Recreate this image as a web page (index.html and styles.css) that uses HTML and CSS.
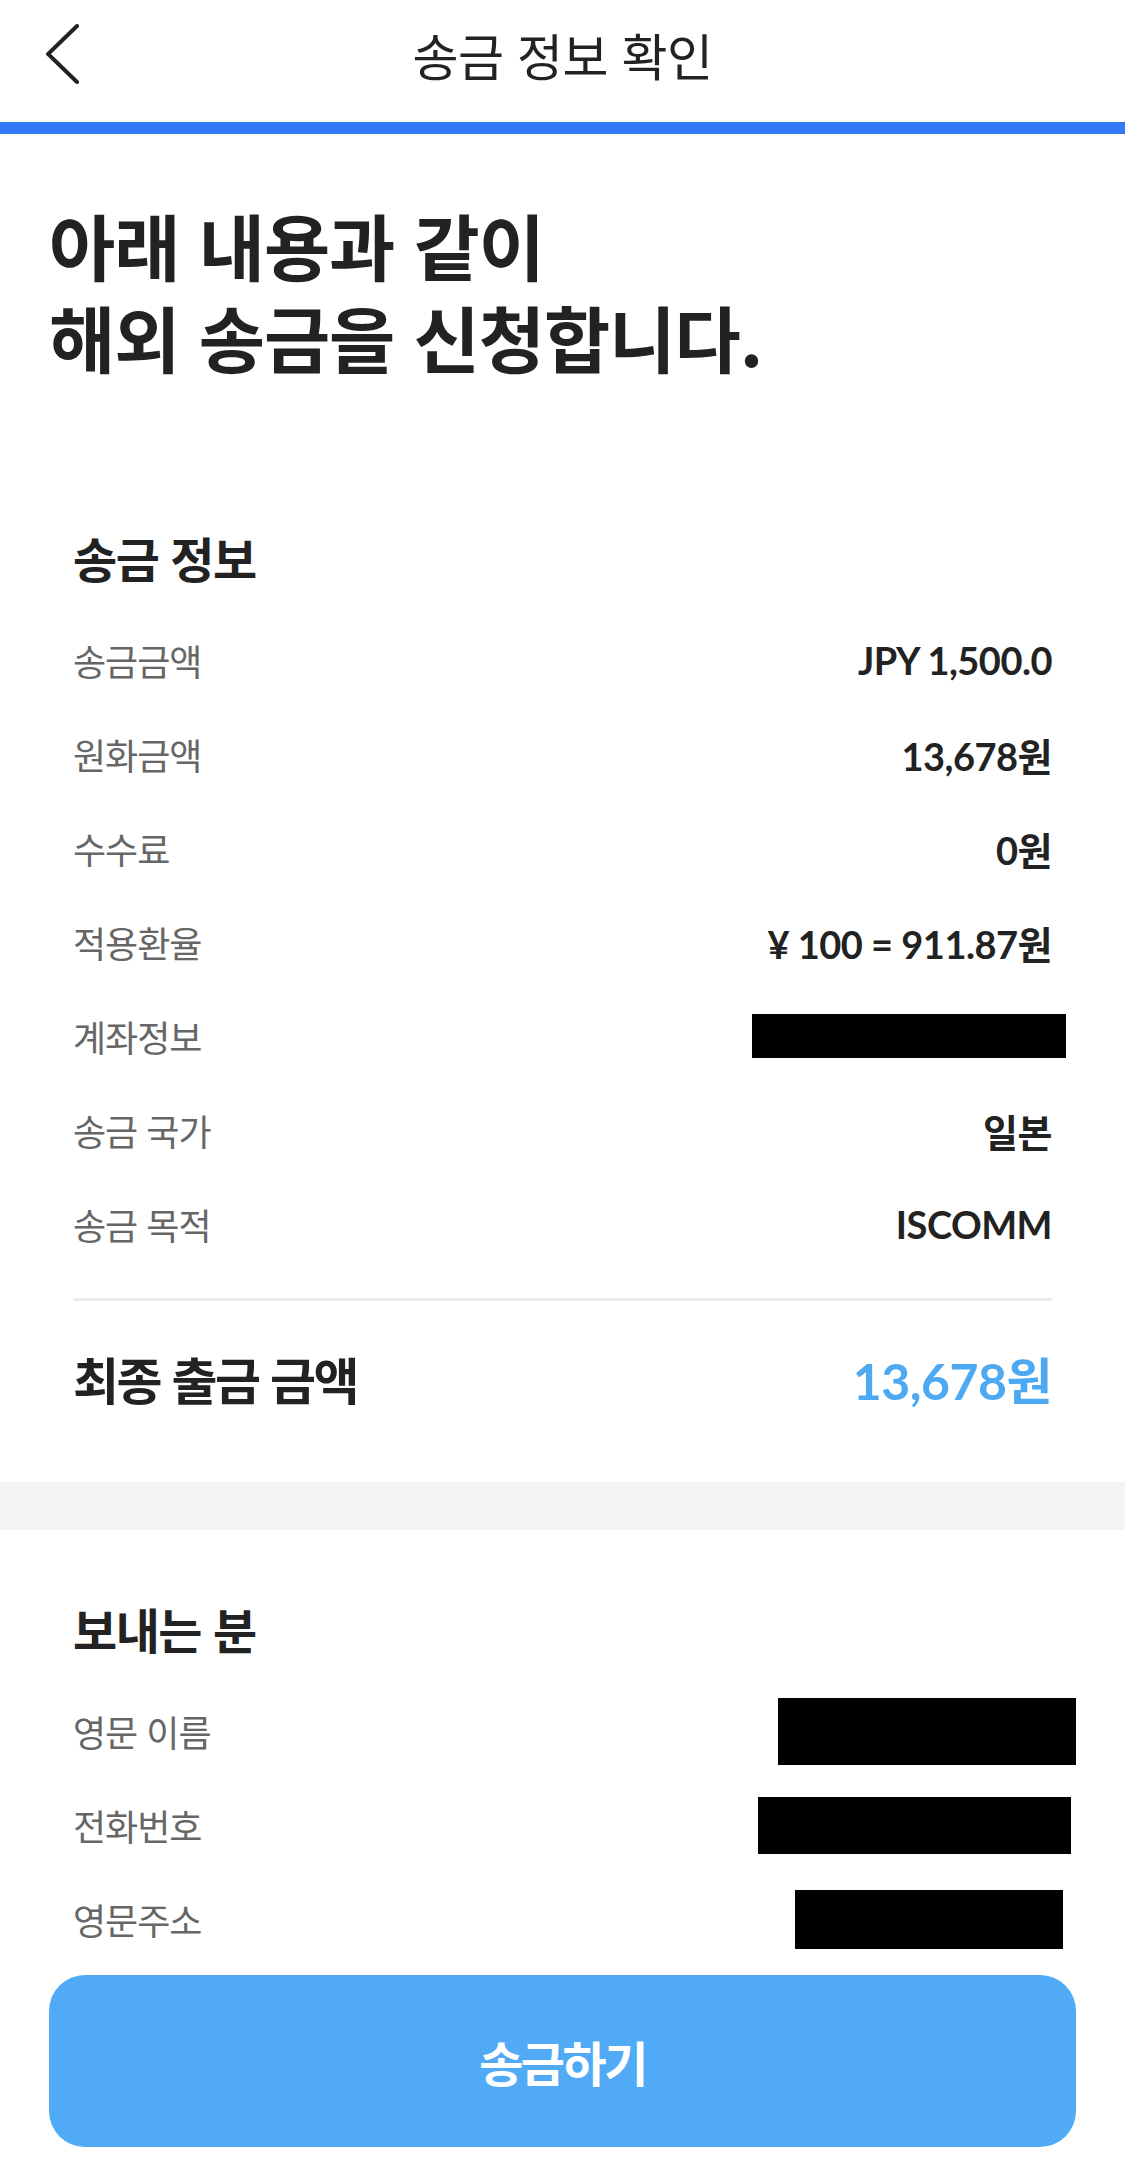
FILE: index.html
```html
<!DOCTYPE html>
<html lang="ko">
  <head>
    <meta charset="UTF-8" />
    <meta name="viewport" content="width=device-width, initial-scale=1.0" />
    <title>송금 정보 확인</title>
    <link rel="stylesheet" href="styles.css">
  </head>
  <body>
    <header class="topbar">
      <button class="back" aria-label="뒤로">
        <svg width="34" height="60" viewBox="0 0 34 60">
          <polyline points="31,2 2,30 31,58" fill="none" stroke="#222" stroke-width="4" stroke-linecap="round" />
        </svg>
      </button>
      <h1 class="topbar-title">송금 정보 확인</h1>
      <span></span>
    </header>
    <div class="progress"></div>

    <main>
      <h2 class="intro">
        <span class="intro-line">아래 내용과 같이</span>
        <span class="intro-line">해외 송금을 신청합니다.</span>
      </h2>

      <!-- 송금 정보 -->
      <section class="card">
        <h3 class="card-title">송금 정보</h3>
        <dl class="rows">
          <div class="row"><dt>송금금액</dt><dd>JPY 1,500.0</dd></div>
          <div class="row"><dt>원화금액</dt><dd>13,678원</dd></div>
          <div class="row"><dt>수수료</dt><dd>0원</dd></div>
          <div class="row"><dt>적용환율</dt><dd>¥ 100 = 911.87원</dd></div>
          <div class="row"><dt>계좌정보</dt><dd><span class="mask mask-account"></span></dd></div>
          <div class="row"><dt>송금 국가</dt><dd>일본</dd></div>
          <div class="row"><dt>송금 목적</dt><dd>ISCOMM</dd></div>
        </dl>
        <div class="total">
          <span class="total-label">최종 출금 금액</span>
          <span class="total-value">13,678원</span>
        </div>
      </section>

      <div class="band"></div>

      <!-- 보내는 분 -->
      <section class="card sender">
        <h3 class="card-title">보내는 분</h3>
        <dl class="rows">
          <div class="row"><dt>영문 이름</dt><dd><span class="mask mask-name"></span></dd></div>
          <div class="row"><dt>전화번호</dt><dd><span class="mask mask-phone"></span></dd></div>
          <div class="row"><dt>영문주소</dt><dd><span class="mask mask-address"></span></dd></div>
        </dl>
      </section>

      <button class="submit">송금하기</button>
    </main>
  </body>
</html>
```

FILE: styles.css
```css
*,
*::before,
*::after {
  box-sizing: border-box;
}

body {
  margin: 0;
  background: #fff;
  color: #222;
  font-family: "Noto Sans CJK KR", "Noto Sans", sans-serif;
}

h1,
h2,
h3,
dl,
dd {
  margin: 0;
}

/* Top bar */

.topbar {
  height: 122px;
  padding-bottom: 14px;
  display: grid;
  grid-template-columns: 1fr auto 1fr;
  align-items: center;
}

.back {
  justify-self: start;
  margin-left: 46px;
  padding: 0;
  border: none;
  background: none;
  display: flex;
}

.topbar-title {
  font-size: 50px;
  font-weight: 400;
  line-height: 60px;
  letter-spacing: -0.5px;
}

.progress {
  height: 12px;
  background: #3478f6;
}

/* Intro heading */

.intro {
  margin: 64px 0 0 49px;
  font-size: 72px;
  font-weight: 700;
  letter-spacing: -1px;
  display: flex;
  flex-direction: column;
}

.intro-line {
  height: 92px;
  display: flex;
  align-items: center;
  line-height: 1;
}

/* Cards */

.card {
  padding: 0 73px 57px;
}

.card-title {
  margin-top: 145px;
  font-size: 48px;
  font-weight: 700;
  line-height: 60px;
  letter-spacing: -1.5px;
}

.rows {
  margin-top: 26px;
}

.row {
  height: 94px;
  display: flex;
  justify-content: space-between;
  align-items: center;
}

.row dt {
  color: #666;
  font-size: 36px;
  letter-spacing: -1px;
}

.row dd {
  font-family: "Lato", "Noto Sans CJK KR", sans-serif;
  font-size: 38px;
  font-weight: 700;
  letter-spacing: -0.5px;
  display: flex;
}

.mask {
  display: block;
  background: #000;
}

.mask-account {
  width: 314px;
  height: 44px;
  margin-right: -14px;
}

.mask-name {
  width: 298px;
  height: 67px;
  margin-right: -24px;
}

.mask-phone {
  width: 313px;
  height: 57px;
  margin-right: -19px;
}

.mask-address {
  width: 268px;
  height: 59px;
  margin-right: -11px;
}

.total {
  margin-top: 27px;
  padding-top: 30px;
  border-top: 3px solid #ececec;
  height: 127px;
  display: flex;
  justify-content: space-between;
  align-items: center;
}

.total-label {
  font-size: 50px;
  font-weight: 700;
  letter-spacing: -2.5px;
}

.total-value {
  color: #4ea9f3;
  font-family: "Lato", "Noto Sans CJK KR", sans-serif;
  font-size: 50px;
  font-weight: 700;
  letter-spacing: -0.5px;
}

.band {
  height: 48px;
  background: #f3f4f6;
}

.sender {
  padding-bottom: 0;
}

.sender .card-title {
  margin-top: 68px;
}

/* Submit button */

.submit {
  display: block;
  width: calc(100% - 98px);
  height: 172px;
  margin: 9px 49px 0;
  border: none;
  border-radius: 36px;
  background: #50aaf6;
  color: #fff;
  font-family: "Noto Sans CJK KR", sans-serif;
  font-size: 48px;
  font-weight: 700;
  letter-spacing: -2.5px;
  cursor: pointer;
}
```
